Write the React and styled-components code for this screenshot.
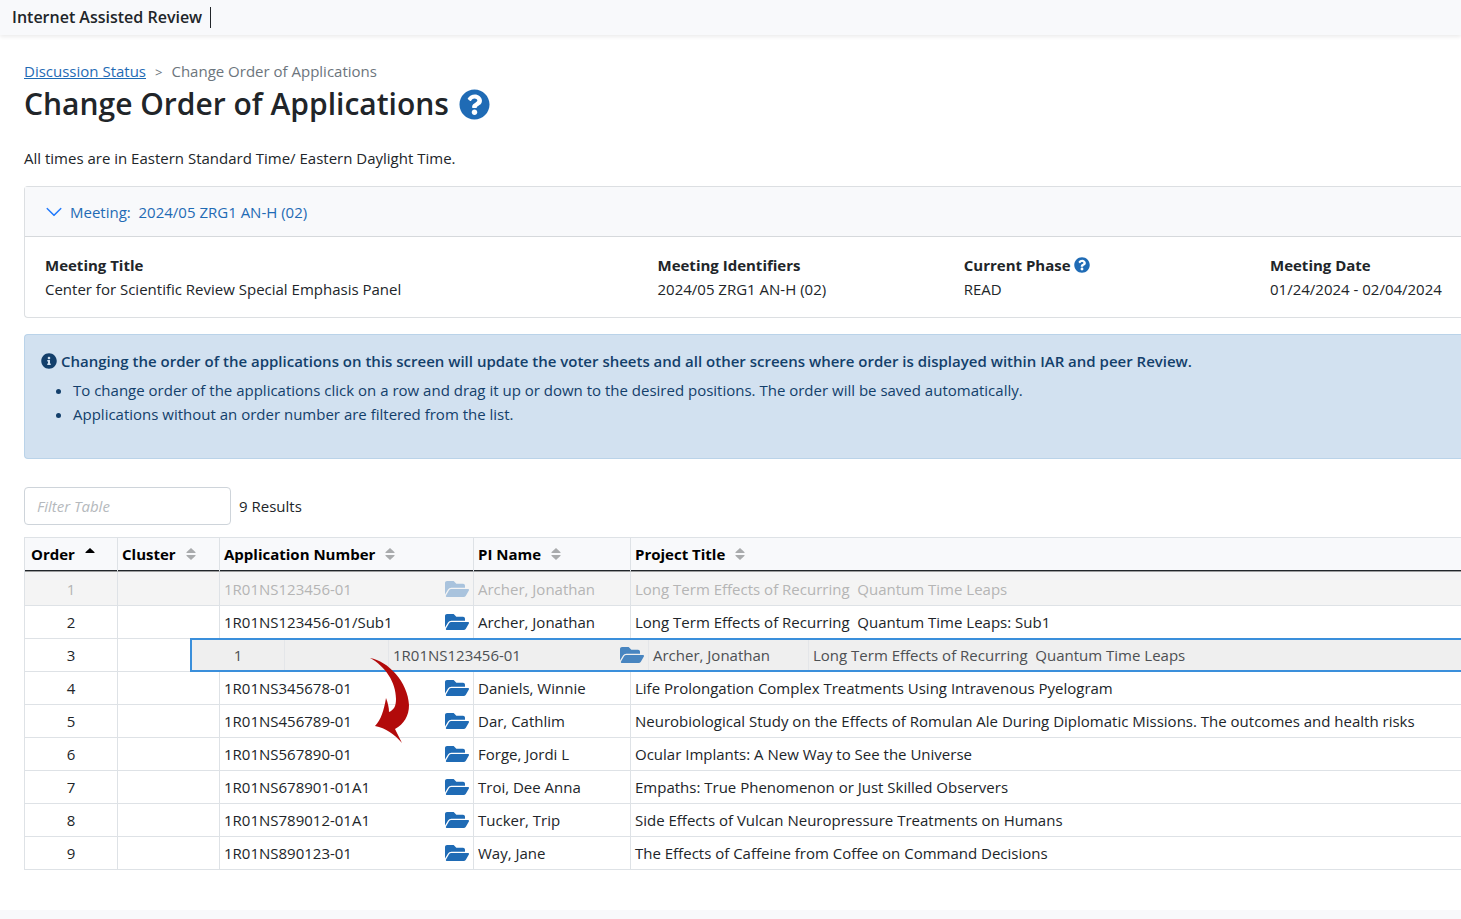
import React from "react";
import styled, { createGlobalStyle } from "styled-components";
import { FaFolderOpen, FaInfoCircle, FaQuestionCircle } from "react-icons/fa";
import { BsChevronDown } from "react-icons/bs";

const columns = ["Order", "Cluster", "Application Number", "PI Name", "Project Title"];

const applications = [
  {
    order: 1,
    number: "1R01NS123456-01",
    pi: "Archer, Jonathan",
    title: "Long Term Effects of Recurring \u00a0Quantum Time Leaps",
    dragging: true,
  },
  {
    order: 2,
    number: "1R01NS123456-01/Sub1",
    pi: "Archer, Jonathan",
    title: "Long Term Effects of Recurring \u00a0Quantum Time Leaps: Sub1",
  },
  { order: 3, number: "", pi: "", title: "" },
  {
    order: 4,
    number: "1R01NS345678-01",
    pi: "Daniels, Winnie",
    title: "Life Prolongation Complex Treatments Using Intravenous Pyelogram",
  },
  {
    order: 5,
    number: "1R01NS456789-01",
    pi: "Dar, Cathlim",
    title:
      "Neurobiological Study on the Effects of Romulan Ale During Diplomatic Missions. The outcomes and health risks",
  },
  {
    order: 6,
    number: "1R01NS567890-01",
    pi: "Forge, Jordi L",
    title: "Ocular Implants: A New Way to See the Universe",
  },
  {
    order: 7,
    number: "1R01NS678901-01A1",
    pi: "Troi, Dee Anna",
    title: "Empaths: True Phenomenon or Just Skilled Observers",
  },
  {
    order: 8,
    number: "1R01NS789012-01A1",
    pi: "Tucker, Trip",
    title: "Side Effects of Vulcan Neuropressure Treatments on Humans",
  },
  {
    order: 9,
    number: "1R01NS890123-01",
    pi: "Way, Jane",
    title: "The Effects of Caffeine from Coffee on Command Decisions",
  },
];

const SortIcon = ({ active }) => (
  <SortSvg viewBox="0 0 10 12" aria-hidden="true">
    <path d="M5 0 L9.6 4.2 Q9.8 5 9 5 H1 Q0.2 5 0.4 4.2 Z" fill={active ? "#000" : "#a9abad"} />
    {!active && <path d="M5 12 L9.6 7.8 Q9.8 7 9 7 H1 Q0.2 7 0.4 7.8 Z" fill="#a9abad" />}
  </SortSvg>
);

const App = () => {
  const dragged = applications.find((item) => item.dragging);

  return (
    <>
      <GlobalStyle />
      <TopBar>
        <Brand>Internet Assisted Review</Brand>
      </TopBar>
      <Main>
        <Breadcrumb aria-label="Breadcrumb">
          <a href="#status">Discussion Status</a>
          <Separator>&gt;</Separator>
          <span>Change Order of Applications</span>
        </Breadcrumb>
        <Heading>
          Change Order of Applications
          <HelpButton type="button" aria-label="Help" $size={31}>
            <FaQuestionCircle />
          </HelpButton>
        </Heading>
        <TimeNote>All times are in Eastern Standard Time/ Eastern Daylight Time.</TimeNote>

        <Card>
          <CardToggle type="button" aria-expanded="true">
            <BsChevronDown />
            <span>Meeting: &nbsp;2024/05 ZRG1 AN-H (02)</span>
          </CardToggle>
          <Details>
            <div>
              <Term>Meeting Title</Term>
              <Value>Center for Scientific Review Special Emphasis Panel</Value>
            </div>
            <div>
              <Term>Meeting Identifiers</Term>
              <Value>2024/05 ZRG1 AN-H (02)</Value>
            </div>
            <div>
              <Term>
                Current Phase
                <HelpButton type="button" aria-label="About phases" $size={16}>
                  <FaQuestionCircle />
                </HelpButton>
              </Term>
              <Value>READ</Value>
            </div>
            <div>
              <Term>Meeting Date</Term>
              <Value>01/24/2024 - 02/04/2024</Value>
            </div>
          </Details>
        </Card>

        <Alert>
          <AlertTitle>
            <FaInfoCircle />
            Changing the order of the applications on this screen will update the voter sheets and
            all other screens where order is displayed within IAR and peer Review.
          </AlertTitle>
          <AlertList>
            <li>
              To change order of the applications click on a row and drag it up or down to the
              desired positions. The order will be saved automatically.
            </li>
            <li>Applications without an order number are filtered from the list.</li>
          </AlertList>
        </Alert>

        <FilterBar>
          <FilterInput type="text" placeholder="Filter Table" aria-label="Filter Table" />
          <span>9 Results</span>
        </FilterBar>

        <TableWrap>
          <Table>
            <colgroup>
              <Col $width={93} />
              <Col $width={102} />
              <Col $width={254} />
              <Col $width={157} />
              <col />
            </colgroup>
            <thead>
              <tr>
                {columns.map((name, i) => (
                  <Th key={name} aria-sort={i === 0 ? "ascending" : undefined}>
                    <SortButton type="button">
                      {name}
                      <SortIcon active={i === 0} />
                    </SortButton>
                  </Th>
                ))}
              </tr>
            </thead>
            <tbody>
              {applications.map((item) => (
                <Row key={item.order} $dragging={item.dragging}>
                  <Td $center>{item.order}</Td>
                  <Td />
                  <Td>
                    {item.number && (
                      <NumberCell>
                        {item.number}
                        <FolderLink href="#folder" aria-label={`Open ${item.number}`}>
                          <FaFolderOpen />
                        </FolderLink>
                      </NumberCell>
                    )}
                  </Td>
                  <Td>{item.pi}</Td>
                  <Td>{item.title}</Td>
                </Row>
              ))}
            </tbody>
          </Table>

          <DragRow>
            <DragCell $center>{dragged.order}</DragCell>
            <DragCell />
            <DragCell>
              <NumberCell>
                {dragged.number}
                <FolderLink href="#folder" aria-label={`Open ${dragged.number}`}>
                  <FaFolderOpen />
                </FolderLink>
              </NumberCell>
            </DragCell>
            <DragCell>{dragged.pi}</DragCell>
            <DragCell>{dragged.title}</DragCell>
          </DragRow>

          <DropArrow viewBox="0 0 40 86" aria-hidden="true">
            <path
              d="M0 0 C18 3 38 24 39 47 C39 58 34 66 25 71 L32 85 C24 76 16 70 5 68 C11 62 14 52 16 40 C18 45 19 50 19 54 C24 52 26 48 26 41 C26 24 15 8 0 0 Z"
              fill="#b20a0a"
            />
          </DropArrow>
        </TableWrap>
      </Main>
      <Footer />
    </>
  );
};

export default App;

const GlobalStyle = createGlobalStyle`
  *,
  *::before,
  *::after {
    box-sizing: border-box;
  }

  body {
    margin: 0;
    background: #fff;
    color: #212529;
    font-family: "Open Sans", "Noto Sans", sans-serif;
    font-size: 15px;
    line-height: 24px;
    overflow-x: hidden;
  }

  button,
  input {
    font: inherit;
  }
`;

// HEADER
const TopBar = styled.header`
  display: flex;
  align-items: center;
  height: 35px;
  padding: 0 12px;
  background: #f8f9fb;
  box-shadow: 0 2px 4px rgba(0, 0, 0, 0.08);
`;

const Brand = styled.div`
  padding-right: 8px;
  border-right: 1px solid #212529;
  font-size: 16px;
  font-weight: 600;
  line-height: 21px;
`;

const Main = styled.main`
  padding: 24px 0 40px 24px;
`;

const Breadcrumb = styled.nav`
  color: #6c757d;

  a {
    color: #1f6bb5;
  }
`;

const Separator = styled.span`
  padding: 0 9px;
  font-size: 13px;
`;

const Heading = styled.h1`
  display: flex;
  align-items: center;
  gap: 10px;
  margin: 0 0 22px;
  font-size: 30px;
  font-weight: 600;
  line-height: 40px;
`;

const HelpButton = styled.button`
  display: inline-flex;
  padding: 0;
  border: 0;
  background: none;
  color: #1f6bb5;
  font-size: ${(props) => props.$size}px;
  cursor: pointer;
`;

const TimeNote = styled.p`
  margin: 0 0 16px;
`;

// MEETING CARD
const Card = styled.section`
  border: 1px solid #dcdfe2;
  border-right: 0;
  border-radius: 4px 0 0 4px;
  margin-bottom: 16px;
`;

const CardToggle = styled.button`
  display: flex;
  align-items: center;
  gap: 7px;
  width: 100%;
  height: 50px;
  padding: 0 20px;
  border: 0;
  border-bottom: 1px solid #d6d9dc;
  background: #f8f9fb;
  color: #1f6bb5;
  cursor: pointer;

  svg {
    width: 18px;
    height: 18px;
    color: #0d6efd;
    stroke: #0d6efd;
    stroke-width: 0.3;
  }
`;

const Details = styled.div`
  display: grid;
  grid-template-columns: 4fr 2fr 2fr 191px;
  padding: 16px 0 16px 20px;
`;

const Term = styled.div`
  display: flex;
  align-items: center;
  gap: 3px;
  font-weight: 700;
`;

const Value = styled.div`
  white-space: nowrap;
`;

// ALERT
const Alert = styled.section`
  padding: 14px 16px 16px;
  border: 1px solid #bad3e9;
  border-right: 0;
  border-radius: 4px 0 0 4px;
  margin-bottom: 28px;
  background: #d2e1f0;
  color: #133f6b;
`;

const AlertTitle = styled.div`
  display: flex;
  align-items: center;
  gap: 4px;
  font-weight: 600;

  svg {
    width: 16px;
    height: 16px;
  }
`;

const AlertList = styled.ul`
  margin: 5px 0 16px;
  padding-left: 32px;
`;

// TABLE
const FilterBar = styled.div`
  display: flex;
  align-items: center;
  gap: 8px;
  margin-bottom: 12px;
`;

const FilterInput = styled.input`
  width: 207px;
  height: 38px;
  padding: 0 12px;
  border: 1px solid #ced4da;
  border-radius: 4px;

  &::placeholder {
    color: #b5b9bd;
    font-style: italic;
  }
`;

const TableWrap = styled.div`
  position: relative;
`;

const Table = styled.table`
  width: 100%;
  table-layout: fixed;
  border-collapse: separate;
  border-spacing: 0;
  border: 1px solid #dee2e6;
  border-width: 1px 0 0 1px;
`;

const Col = styled.col`
  width: ${(props) => props.$width}px;
`;

const Th = styled.th`
  height: 34px;
  padding: 0 4px 2px;
  border-right: 1px solid #dee2e6;
  border-bottom: 1px solid #9b9c9d;
  box-shadow: inset 0 -1px #212529;
  background: #f8f9fb;
  text-align: left;

  &:first-child {
    padding-left: 6px;
  }

  &:last-child {
    border-right: 0;
  }
`;

const SortButton = styled.button`
  display: flex;
  align-items: center;
  gap: 10px;
  padding: 0;
  border: 0;
  background: none;
  color: #000;
  font-weight: 700;
  white-space: nowrap;
  cursor: pointer;
`;

const SortSvg = styled.svg`
  width: 10px;
  height: 12px;
`;

const Row = styled.tr`
  height: 33px;
  background: ${(props) => (props.$dragging ? "#f4f4f4" : "#fff")};
  color: ${(props) => (props.$dragging ? "#b5b5b5" : "#212529")};
  cursor: move;

  &:first-child {
    height: 34px;
  }

  a {
    opacity: ${(props) => (props.$dragging ? 0.35 : 1)};
  }
`;

const Td = styled.td`
  padding: 0 4px;
  border-right: 1px solid #dee2e6;
  border-bottom: 1px solid #dee2e6;
  text-align: ${(props) => (props.$center ? "center" : "left")};
  white-space: nowrap;

  &:last-child {
    border-right: 0;
  }
`;

const NumberCell = styled.div`
  display: flex;
  align-items: center;
  justify-content: space-between;
`;

const FolderLink = styled.a`
  display: flex;
  color: #1f6bb5;

  svg {
    width: 24px;
    height: 22px;
  }
`;

// row being dragged, floats over the table
const DragRow = styled.div`
  position: absolute;
  top: 101px;
  left: 166px;
  right: 0;
  display: grid;
  grid-template-columns: 93px 104px 260px 160px 1fr;
  height: 34px;
  border: 2px solid #3a8fdb;
  border-right: 0;
  background: #efefef;
  color: #4d5053;
  overflow: hidden;
  cursor: move;

  a {
    opacity: 0.8;
  }
`;

const DragCell = styled.div`
  padding: 3px 4px;
  border-right: 1px solid #e4e6e9;
  text-align: ${(props) => (props.$center ? "center" : "left")};
  white-space: nowrap;

  &:last-child {
    border-right: 0;
  }
`;

const DropArrow = styled.svg`
  position: absolute;
  top: 121px;
  left: 346px;
  width: 40px;
  height: 86px;
  pointer-events: none;
`;

const Footer = styled.footer`
  height: 9px;
  background: #f8f9fb;
`;
